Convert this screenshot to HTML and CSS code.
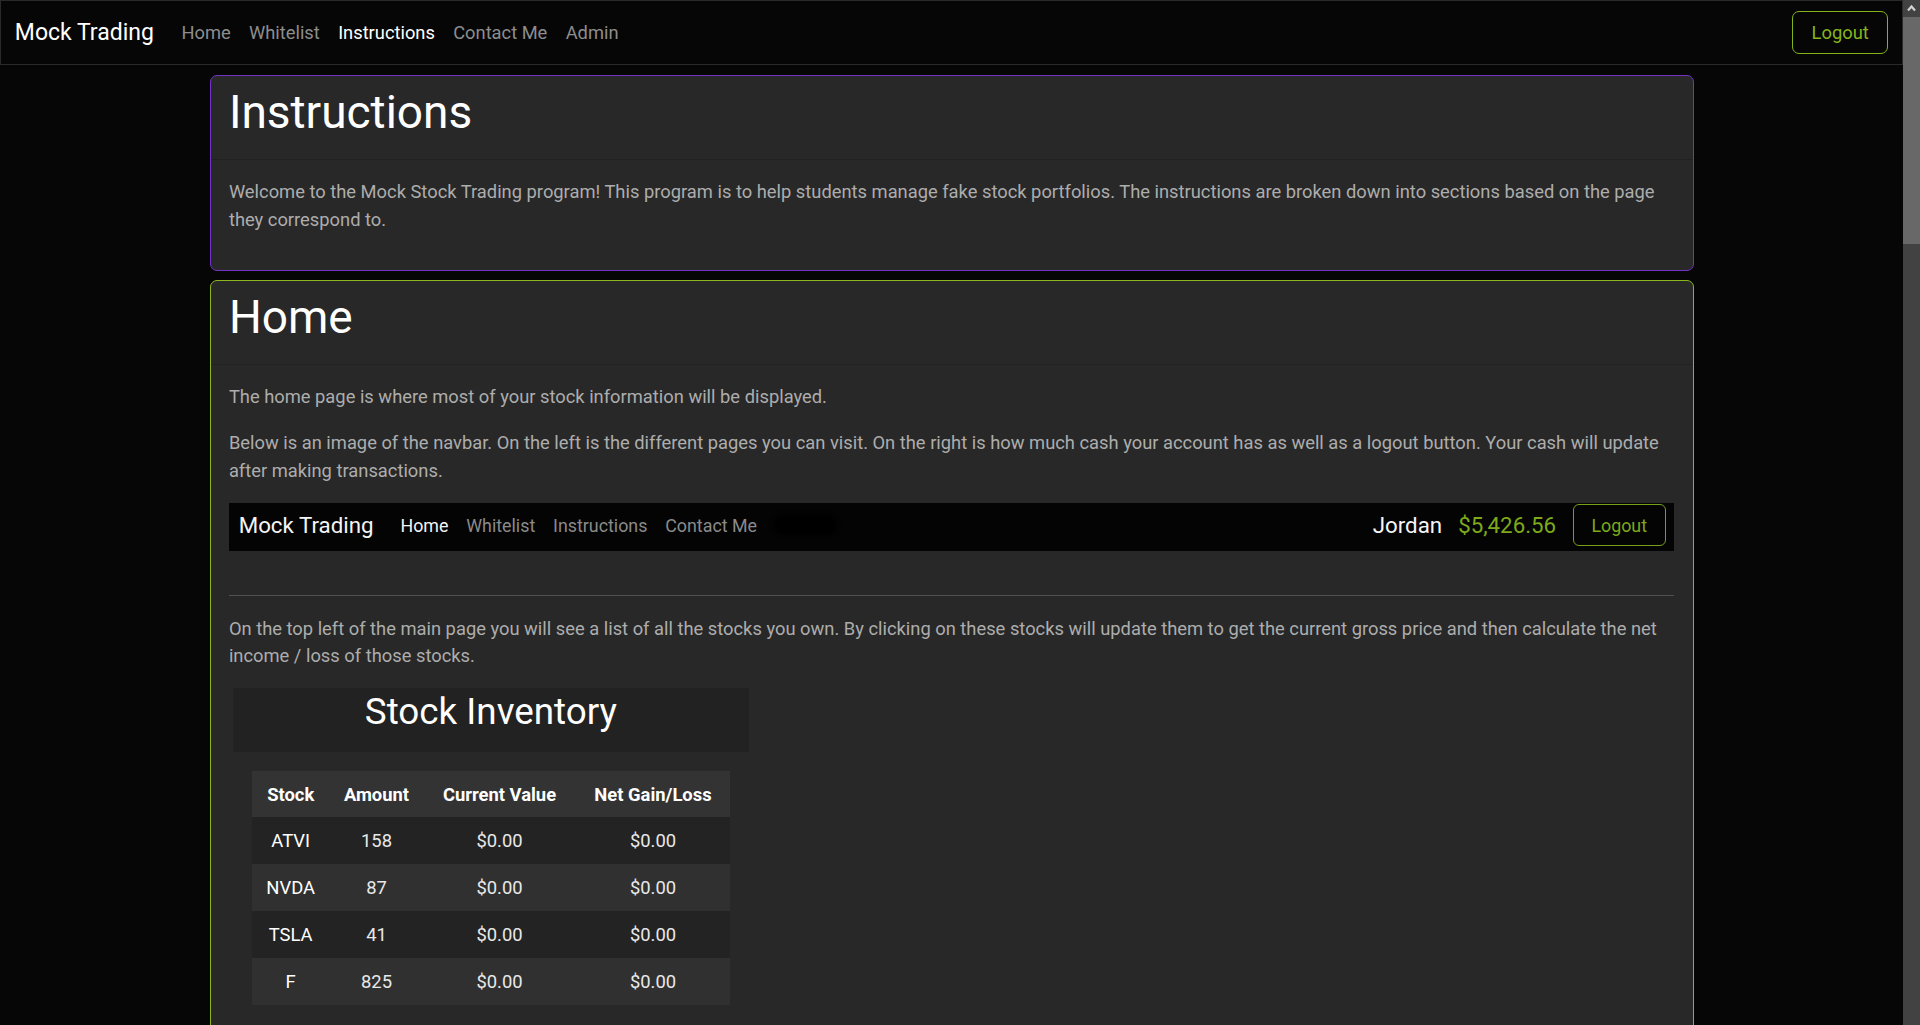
FILE: index.html
```html
<!DOCTYPE html>
<html lang="en">
<head>
<meta charset="utf-8">
<title>Mock Trading - Instructions</title>
<link rel="stylesheet" href="styles.css">
</head>
<body>
<div class="screen">
  <div class="viewport">
    <nav class="navbar">
      <div class="nav-left">
        <span class="brand">Mock Trading</span>
        <a class="nav-link">Home</a>
        <a class="nav-link">Whitelist</a>
        <a class="nav-link active">Instructions</a>
        <a class="nav-link">Contact Me</a>
        <a class="nav-link">Admin</a>
      </div>
      <button class="btn-logout">Logout</button>
    </nav>

    <main class="container">
      <section class="card card-purple">
        <header class="card-header"><h1>Instructions</h1></header>
        <div class="card-body">
          <p>Welcome to the Mock Stock Trading program! This program is to help students manage fake stock portfolios. The instructions are broken down into sections based on the page they correspond to.</p>
        </div>
      </section>

      <section class="card card-green">
        <header class="card-header"><h1>Home</h1></header>
        <div class="card-body">
          <p>The home page is where most of your stock information will be displayed.</p>
          <p>Below is an image of the navbar. On the left is the different pages you can visit. On the right is how much cash your account has as well as a logout button. Your cash will update after making transactions.</p>

          <div class="navshot">
            <div class="ns-left">
              <span class="ns-brand">Mock Trading</span>
              <span class="ns-link active">Home</span>
              <span class="ns-link">Whitelist</span>
              <span class="ns-link">Instructions</span>
              <span class="ns-link">Contact Me</span>
              <span class="ns-blob"></span>
            </div>
            <div class="ns-right">
              <span class="ns-user">Jordan</span>
              <span class="ns-cash">$5,426.56</span>
              <span class="ns-btn">Logout</span>
            </div>
          </div>

          <hr class="divider">

          <p>On the top left of the main page you will see a list of all the stocks you own. By clicking on these stocks will update them to get the current gross price and then calculate the net income / loss of those stocks.</p>

          <div class="invshot">
            <div class="inv-title">Stock Inventory</div>
            <table class="inv-table">
              <colgroup>
                <col class="c1"><col class="c2"><col class="c3"><col class="c4">
              </colgroup>
              <thead>
                <tr><th>Stock</th><th>Amount</th><th>Current Value</th><th>Net Gain/Loss</th></tr>
              </thead>
              <tbody>
                <tr><td class="sym">ATVI</td><td>158</td><td>$0.00</td><td>$0.00</td></tr>
                <tr><td class="sym">NVDA</td><td>87</td><td>$0.00</td><td>$0.00</td></tr>
                <tr><td class="sym">TSLA</td><td>41</td><td>$0.00</td><td>$0.00</td></tr>
                <tr><td class="sym">F</td><td>825</td><td>$0.00</td><td>$0.00</td></tr>
              </tbody>
            </table>
          </div>
        </div>
      </section>
    </main>
  </div>

  <div class="scrollbar">
    <div class="sb-button">
      <svg width="17" height="17" viewBox="0 0 17 17"><polyline points="5,10.5 8.5,6.5 12,10.5" fill="none" stroke="#d2d2d2" stroke-width="2.2" stroke-linejoin="miter"/></svg>
    </div>
    <div class="sb-thumb"></div>
  </div>
</div>
</body>
</html>
```

FILE: styles.css
```css
* { box-sizing: border-box; }

html, body {
  margin: 0;
  padding: 0;
  background: #060606;
  font-family: Roboto, "Liberation Sans", Arial, sans-serif;
  height: 1025px;
  overflow: hidden;
}

.screen {
  display: flex;
  height: 1025px;
}

.viewport {
  flex: 1;
  overflow: hidden;
  background: #060606;
}

/* ---------- top navbar ---------- */
.navbar {
  height: 65px;
  border: 1px solid #2a2a2a;
  background: #060606;
  display: flex;
  align-items: center;
  justify-content: space-between;
  padding: 0 13.8px;
}

.nav-left {
  display: flex;
  align-items: center;
}

.brand {
  font-size: 23px;
  color: #ffffff;
  margin-right: 18.4px;
}

.nav-link {
  font-size: 18.3px;
  color: #8d8d8d;
  padding: 0 9.2px;
}

.nav-link.active {
  color: #ffffff;
}

.btn-logout {
  width: 96px;
  height: 43px;
  background: transparent;
  border: 1px solid #84b31c;
  border-radius: 7px;
  color: #85b51c;
  font-family: Roboto, "Liberation Sans", Arial, sans-serif;
  font-size: 18.4px;
  padding: 0;
}

/* ---------- content ---------- */
.container {
  width: 1484px;
  margin: 0 auto;
  padding-top: 10px;
  display: flex;
  flex-direction: column;
  gap: 9.2px;
}

.card {
  background: #282828;
  border: 1px solid;
  border-radius: 7px;
}

.card-purple { border-color: #7433c4; }
.card-green { border-color: #8db51c; }

.card-header {
  padding: 9.2px 18.4px;
  border-bottom: 1px solid #212121;
}

.card-header h1 {
  margin: 0 0 9.2px;
  font-size: 46px;
  font-weight: 400;
  line-height: 1.2;
  color: #ffffff;
}

.card-body {
  padding: 18.4px;
}

.card-body p {
  margin: 0 0 18.4px;
  font-size: 18.33px;
  line-height: 27.6px;
  color: #adadad;
}

/* ---------- navbar image ---------- */
.navshot {
  height: 48px;
  background: #040404;
  display: flex;
  align-items: center;
  justify-content: space-between;
  padding: 0 8.4px 4px 9.8px;
  margin-bottom: 44.3px;
}

.ns-left, .ns-right {
  display: flex;
  align-items: center;
}

.ns-brand {
  font-size: 22.3px;
  color: #f4f4f4;
  margin-right: 18px;
}

.ns-link {
  font-size: 17.85px;
  color: #8a8a8a;
  padding: 0 8.9px;
}

.ns-link.active {
  color: #f4f4f4;
}

.ns-blob {
  width: 62px;
  height: 20px;
  margin-left: 8px;
  background: #000000;
  border-radius: 9px;
  filter: blur(2px);
}

.ns-user {
  font-size: 22.3px;
  color: #f6f6f6;
  margin-right: 16px;
}

.ns-cash {
  font-size: 22.3px;
  color: #7ea91a;
  margin-right: 16.6px;
}

.ns-btn {
  width: 93px;
  height: 42px;
  border: 1px solid #75a018;
  border-radius: 6px;
  color: #7ea91a;
  font-size: 17.85px;
  display: flex;
  align-items: center;
  justify-content: center;
}

.divider {
  margin: 18.4px 0;
  border: 0;
  border-top: 1px solid #515151;
  opacity: 1;
}

/* ---------- stock inventory image ---------- */
.invshot {
  width: 524px;
  padding: 0 0 24px 4px;
}

.inv-title {
  margin-top: 1px;
  width: 516px;
  height: 64px;
  background: #222222;
  color: #ffffff;
  font-size: 36.8px;
  text-align: center;
  padding-top: 2px;
}

.inv-table {
  margin: 19px 0 0 19px;
  width: 478.6px;
  border-collapse: collapse;
  table-layout: fixed;
  font-size: 18.4px;
  color: #e8e8e8;
  text-align: center;
}

.inv-table .c1 { width: 77.6px; }
.inv-table .c2 { width: 94px; }
.inv-table .c3 { width: 152px; }
.inv-table .c4 { width: 155px; }

.inv-table th {
  height: 46px;
  background: #333333;
  color: #ffffff;
  font-weight: 700;
  padding: 0;
}

.inv-table td {
  height: 47px;
  padding: 0;
}

.inv-table td.sym { color: #ffffff; }

.inv-table tbody tr:nth-child(odd) { background: #232323; }
.inv-table tbody tr:nth-child(even) { background: #303030; }

/* ---------- fake scrollbar ---------- */
.scrollbar {
  width: 17px;
  background: #424242;
  display: flex;
  flex-direction: column;
}

.sb-button {
  height: 17px;
  background: #424242;
}

.sb-button svg { display: block; }

.sb-thumb {
  height: 227px;
  background: #686868;
}
```
